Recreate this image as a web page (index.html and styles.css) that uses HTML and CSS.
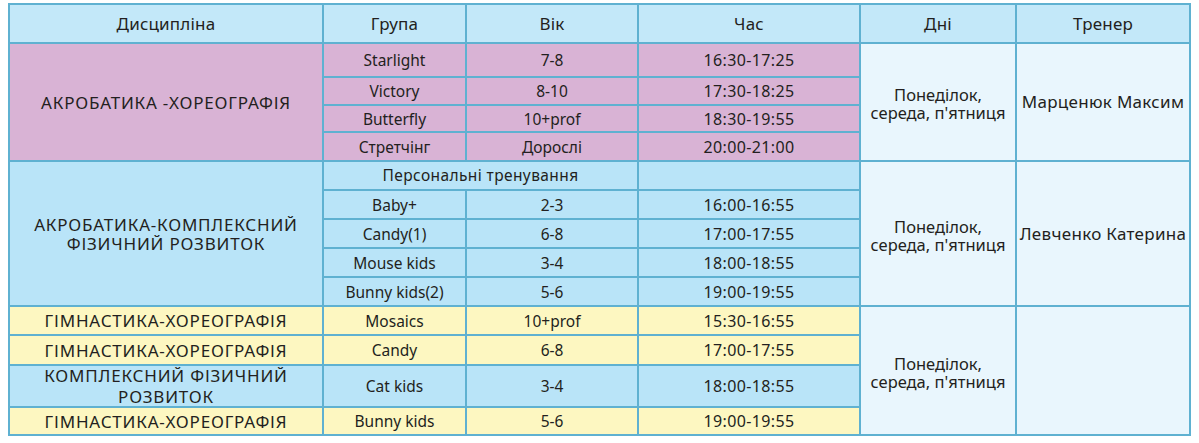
FILE: index.html
```html
<!DOCTYPE html>
<html lang="uk">
<head>
<meta charset="utf-8">
<title>Розклад</title>
<link rel="stylesheet" href="styles.css">
</head>
<body>
<div class="schedule">
  <div class="c head">Дисципліна</div>
  <div class="c head">Група</div>
  <div class="c head">Вік</div>
  <div class="c head">Час</div>
  <div class="c head">Дні</div>
  <div class="c head">Тренер</div>

  <div class="c pink disc span4">АКРОБАТИКА -ХОРЕОГРАФІЯ</div>
  <div class="c pink">Starlight</div>
  <div class="c pink">7-8</div>
  <div class="c pink time">16:30-17:25</div>
  <div class="c light days span4">Понеділок,<br>середа, п'ятниця</div>
  <div class="c light coach span4">Марценюк Максим</div>
  <div class="c pink">Victory</div>
  <div class="c pink">8-10</div>
  <div class="c pink time">17:30-18:25</div>
  <div class="c pink">Butterfly</div>
  <div class="c pink">10+prof</div>
  <div class="c pink time">18:30-19:55</div>
  <div class="c pink">Стретчінг</div>
  <div class="c pink">Дорослі</div>
  <div class="c pink time">20:00-21:00</div>

  <div class="c blue disc span5">АКРОБАТИКА-КОМПЛЕКСНИЙ<br>ФІЗИЧНИЙ РОЗВИТОК</div>
  <div class="c blue wide personal">Персональні тренування</div>
  <div class="c blue"></div>
  <div class="c light days span5">Понеділок,<br>середа, п'ятниця</div>
  <div class="c light coach span5">Левченко Катерина</div>
  <div class="c blue">Baby+</div>
  <div class="c blue">2-3</div>
  <div class="c blue time">16:00-16:55</div>
  <div class="c blue">Candy(1)</div>
  <div class="c blue">6-8</div>
  <div class="c blue time">17:00-17:55</div>
  <div class="c blue">Mouse kids</div>
  <div class="c blue">3-4</div>
  <div class="c blue time">18:00-18:55</div>
  <div class="c blue">Bunny kids(2)</div>
  <div class="c blue">5-6</div>
  <div class="c blue time">19:00-19:55</div>

  <div class="c yellow disc">ГІМНАСТИКА-ХОРЕОГРАФІЯ</div>
  <div class="c yellow">Mosaics</div>
  <div class="c yellow">10+prof</div>
  <div class="c yellow time">15:30-16:55</div>
  <div class="c light days span4">Понеділок,<br>середа, п'ятниця</div>
  <div class="c light coach span4"></div>
  <div class="c yellow disc">ГІМНАСТИКА-ХОРЕОГРАФІЯ</div>
  <div class="c yellow">Candy</div>
  <div class="c yellow">6-8</div>
  <div class="c yellow time">17:00-17:55</div>
  <div class="c blue disc two">КОМПЛЕКСНИЙ ФІЗИЧНИЙ<br>РОЗВИТОК</div>
  <div class="c blue">Cat kids</div>
  <div class="c blue">3-4</div>
  <div class="c blue time">18:00-18:55</div>
  <div class="c yellow disc">ГІМНАСТИКА-ХОРЕОГРАФІЯ</div>
  <div class="c yellow">Bunny kids</div>
  <div class="c yellow">5-6</div>
  <div class="c yellow time">19:00-19:55</div>
</div>
</body>
</html>
```

FILE: styles.css
```css
html, body {
  margin: 0;
  padding: 0;
  background: #ffffff;
}

body {
  padding: 3px 0 0 8px;
  font-family: "Noto Sans", "DejaVu Sans", sans-serif;
  color: #231f20;
}

.schedule {
  display: grid;
  width: 1183px;
  box-sizing: border-box;
  padding: 2px;
  gap: 2px;
  background: #5fb1d1;
  grid-template-columns: 312px 141px 170px 220px 154px 172px;
  grid-template-rows: 37px 32px 26px 25px 27px 27px 27px 27px 27px 27px 27px 28px 40px 26px;
}

.c {
  display: flex;
  align-items: center;
  justify-content: center;
  text-align: center;
  font-size: 15.5px;
  line-height: 18px;
  white-space: nowrap;
}

.head { background: #c3e8f9; font-size: 17px; letter-spacing: 0.2px; }
.pink { background: #d9b3d5; }
.blue { background: #b9e4f8; }
.yellow { background: #fdf7c1; }
.light { background: #e9f6fd; }

.disc { font-size: 17px; line-height: 19px; letter-spacing: 0.8px; }
.disc.two { line-height: 21px; }
.time { font-size: 16px; letter-spacing: 0.35px; }
.coach { font-size: 17px; letter-spacing: 0.3px; }
.days { font-size: 16.5px; line-height: 18px; padding-top: 4px; }
.personal { letter-spacing: 0.4px; padding-bottom: 2px; }

.span4 { grid-row: span 4; }
.span5 { grid-row: span 5; }
.wide { grid-column: span 2; }
```
